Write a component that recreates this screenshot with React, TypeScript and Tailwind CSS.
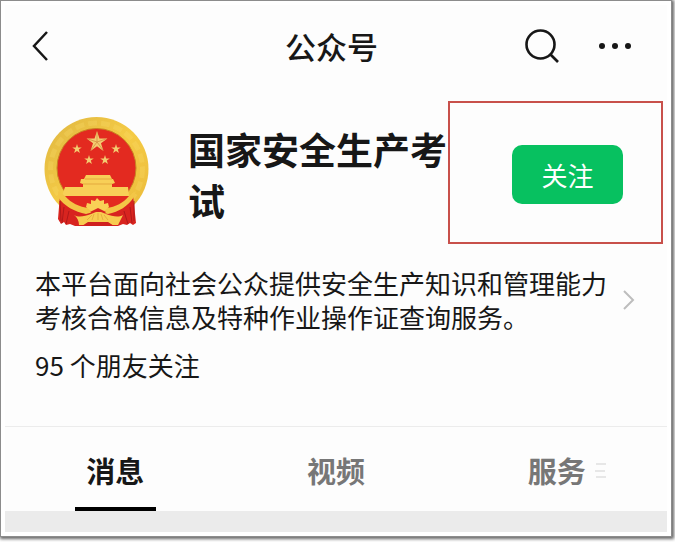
import React, { useState } from 'react';

const TABS = ['消息', '视频', '服务'];

const STARS = [
  { x: 53, y: 25, r: 11 },
  { x: 33, y: 32, r: 5 },
  { x: 72, y: 32, r: 5 },
  { x: 45, y: 43, r: 5 },
  { x: 61, y: 43, r: 5 },
];

const starPoints = (cx: number, cy: number, r: number) =>
  Array.from({ length: 10 }, (_, i) => {
    const radius = i % 2 ? r * 0.38 : r;
    const angle = (i * Math.PI) / 5 - Math.PI / 2;
    return `${cx + radius * Math.cos(angle)},${cy + radius * Math.sin(angle)}`;
  }).join(' ');

const Emblem: React.FC = () => (
  <svg className="w-[105px] h-[111px] shrink-0" viewBox="0 0 105 111" role="img" aria-label="国徽">
    <defs>
      <linearGradient id="gold" x1="0" y1="0" x2="1" y2="1">
        <stop offset="0" stopColor="#dfb742" />
        <stop offset="0.5" stopColor="#f5cb45" />
        <stop offset="1" stopColor="#eab93a" />
      </linearGradient>
    </defs>
    <circle cx="52.5" cy="52" r="52" fill="url(#gold)" />
    <circle cx="52.5" cy="52" r="46" fill="none" stroke="#fae06e" strokeWidth="5" strokeDasharray="9 4" opacity="0.25" />
    <circle cx="52.5" cy="51" r="39.5" fill="#e32a20" stroke="#c98222" strokeWidth="1" />
    {STARS.map(s => (
      <polygon key={`${s.x}-${s.y}`} points={starPoints(s.x, s.y, s.r)} fill="#f3cc70" />
    ))}
    <path d="M53 25V15M53 25l9-3M53 25l6 8M53 25l-6 8M53 25l-9-3" fill="none" stroke="#cf8a3c" strokeWidth="0.7" />
    {/* gate tower */}
    <path d="M42 58h24l2 4H40zM37 62h32l2 4-3 1v3H39v-3l-3-1z" fill="#f8cf57" />
    <path d="M41 62h27M39 67h29" stroke="#dd9a35" strokeWidth="0.7" />
    <path d="M21 70h63l1 9H18z" fill="#f8cf57" />
    {/* drapes */}
    <path d="M16 78c6 9 16 16 28 18h18c12-2 21-9 27-18l3 28-3 2-3-2-3 2-4-1-5 2H31l-5-2-4 1-2-3-3 2-3-5z" fill="#d8241f" />
    <path d="M16 84l1 20M20 90l-2 16M25 94l-3 13M90 84v20M86 90l2 16M80 94l4 13" stroke="#b0181a" strokeWidth="1" fill="none" />
    {/* lower edge of the wreath */}
    <path d="M14 74l7 5c6 7 14 11 24 12h17c10-1 18-5 23-12l7-5-2 6c-6 9-15 15-26 17l-11-3-11 3C31 95 20 89 14 80z" fill="#f3c646" />
    <path d="M21 79h64c-6 7-13 11-23 12H45c-10-1-18-5-24-12z" fill="#e32a20" />
    {/* cogwheel */}
    <path d="M42 90l1-4 4 1v-4l4 1 2-3 3 3 4-1v4l4-1 1 4-5 4-6-2-7 2z" fill="#f9d056" />
    <path d="M46 95l8-4 8 4-3 3h-9z" fill="#d8241f" />
    {/* knot */}
    <path d="M30 98c5 3 11 1 17-1l5-2h5l5 2c6 2 12 4 17 1l-5 10h-6l-5-3H45l-4 3h-6c0-4-2-8-5-10z" fill="#f8cc50" />
    <path d="M43 103l5-5M48 103l2-6M54 103v-7M59 103l-2-6M64 103l-4-5" stroke="#e0a03a" strokeWidth="0.7" fill="none" />
    <path d="M38 109l6-4h20l6 4z" fill="#cf201e" />
  </svg>
);

const App: React.FC = () => {
  const [activeTab, setActiveTab] = useState('消息');
  const [following, setFollowing] = useState(false);

  return (
    <div className="bg-white pr-[3px] pb-[5px] font-['Noto_Sans_CJK_SC',sans-serif] text-[#171717]">
      <div className="border border-[#8c8c8c] bg-white p-1 shadow-[1px_1px_3px_1px_#666666]">
        <main className="bg-[#fdfdfd]">
          <header className="grid h-[84px] grid-cols-[1fr_auto_1fr] items-center pb-[2px] pl-[27px] pr-9">
            <button type="button" aria-label="返回" className="justify-self-start">
              <svg className="block h-8 w-4" viewBox="0 0 16 32" fill="none" stroke="currentColor" strokeWidth="2.5">
                <path d="M15 2L2 16l13 14" />
              </svg>
            </button>
            <h1 className="text-[31px] leading-10 font-medium">公众号</h1>
            <div className="flex items-center gap-10 justify-self-end">
              <button type="button" aria-label="搜索">
                <svg className="block size-[34px]" viewBox="0 0 34 34" fill="none" stroke="currentColor" strokeWidth="2.6">
                  <circle cx="15.5" cy="15.5" r="14" />
                  <path d="M25 25l8 8" />
                </svg>
              </button>
              <button type="button" aria-label="更多">
                <svg className="block h-2 w-8" viewBox="0 0 32 8" fill="currentColor">
                  <circle cx="3" cy="4" r="3" />
                  <circle cx="16" cy="4" r="3" />
                  <circle cx="29" cy="4" r="3" />
                </svg>
              </button>
            </div>
          </header>

          <section className="flex items-center pt-3 pr-1 pl-[39px]">
            <Emblem />
            <h2 className="ml-[39px] min-w-0 flex-1 pt-1 text-[37px] leading-[51px] font-bold">国家安全生产考试</h2>
            <div className="flex h-[143px] w-[215px] shrink-0 items-center justify-end border-2 border-[#c8504b] pt-1 pr-[38px]">
              <button
                type="button"
                onClick={() => setFollowing(!following)}
                className="h-[59px] w-[111px] rounded-[10px] bg-[#07c160] text-[26px] text-white"
              >
                {following ? '已关注' : '关注'}
              </button>
            </div>
          </section>

          <section className="pt-[22px] pr-8 pb-11 pl-[30px] text-[26px] leading-[34px]">
            <a href="#about" className="flex items-center gap-3">
              <p className="min-w-0 flex-1">本平台面向社会公众提供安全生产知识和管理能力考核合格信息及特种作业操作证查询服务。</p>
              <svg className="h-5 w-3 shrink-0" viewBox="0 0 12 20" fill="none" stroke="#bdbdbd" strokeWidth="2">
                <path d="M1 1l9 9-9 9" />
              </svg>
            </a>
            <p className="mt-[14px]">95 个朋友关注</p>
          </section>

          <nav className="grid grid-cols-3 border-t border-[#ececec]" role="tablist">
            {TABS.map(tab => {
              const isActive = tab === activeTab;
              return (
                <button
                  key={tab}
                  type="button"
                  role="tab"
                  aria-selected={isActive}
                  onClick={() => setActiveTab(tab)}
                  className={`relative flex h-[84px] flex-col items-center justify-end text-[29px] leading-[40px] font-bold ${isActive ? 'text-[#171717]' : 'text-[#777777]'}`}
                >
                  <span>{tab}</span>
                  <span className={`mt-[17px] h-1 w-[81px] ${isActive ? 'bg-black' : 'bg-transparent'}`} />
                  {tab === '服务' && (
                    <svg className="absolute top-9 left-1/2 ml-[38px] h-4 w-3" viewBox="0 0 12 16" stroke="#e0e0e0" strokeWidth="1.5">
                      <path d="M1 1h10M0 8h10M1 14h10" />
                    </svg>
                  )}
                </button>
              );
            })}
          </nav>
          <div className="h-[21px] bg-[#ebebeb]" />
        </main>
      </div>
    </div>
  );
};

export default App;
